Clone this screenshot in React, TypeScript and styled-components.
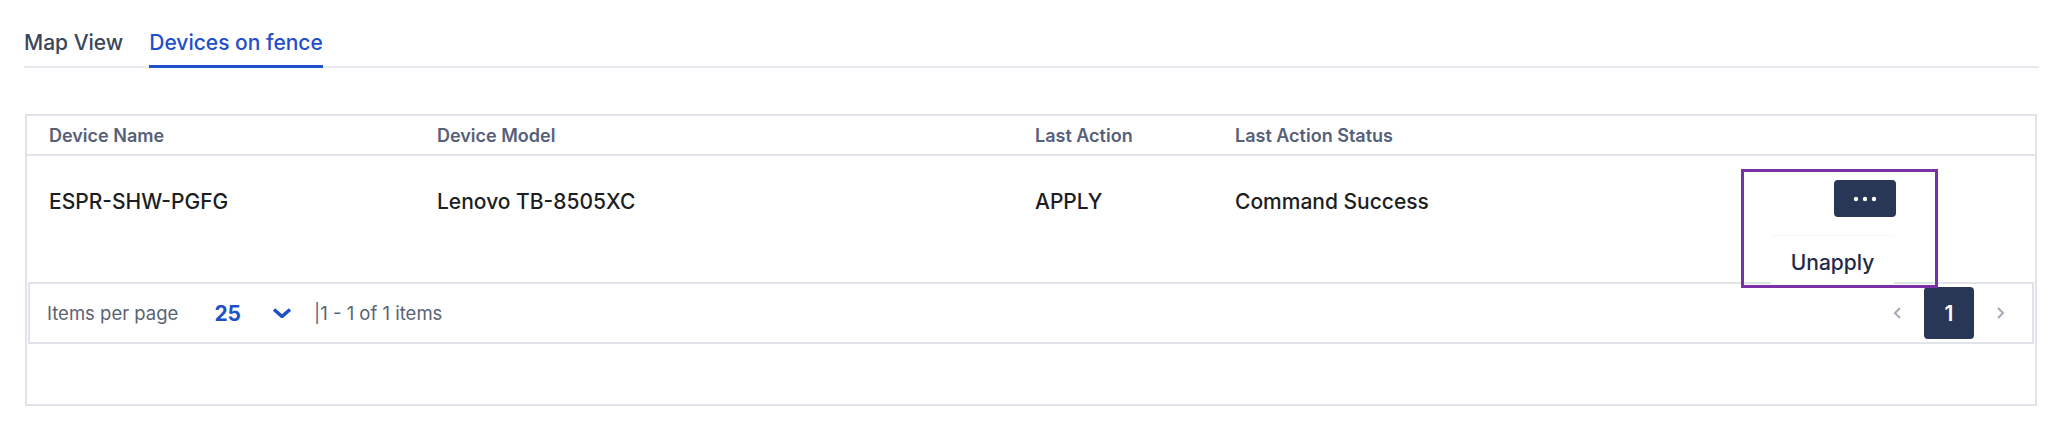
import React from "react";
import styled, { createGlobalStyle } from "styled-components";

const GlobalStyle = createGlobalStyle`
  html, body {
    margin: 0;
    padding: 0;
    background: #ffffff;
  }
  body {
    font-family: Inter, Roboto, "Liberation Sans", Arial, sans-serif;
    color: #1d1f24;
  }
`;

const columns = "388px 598px 200px 527px 1fr";

const rows = [
  {
    name: "ESPR-SHW-PGFG",
    model: "Lenovo TB-8505XC",
    action: "APPLY",
    status: "Command Success",
  },
];

const Page = styled.div`
  padding: 30px 33px 0 24px;
`;

const TabBar = styled.div`
  display: flex;
  gap: 26px;
  border-bottom: 2px solid #e8e9ee;
`;

const Tab = styled.div<{ $active?: boolean }>`
  font-size: 21px;
  font-weight: 500;
  line-height: 25px;
  padding-bottom: 10px;
  margin-bottom: -2px;
  color: ${(p) => (p.$active ? "#1f4fc9" : "#3c4659")};
  border-bottom: 3px solid ${(p) => (p.$active ? "#1f4fc9" : "transparent")};
`;

const Table = styled.div`
  margin: 46px 0 0 1px;
  border: 2px solid #e0e3e8;
  width: 2008px;
`;

const HeaderRow = styled.div`
  display: grid;
  grid-template-columns: ${columns};
  height: 38px;
  align-items: center;
  border-bottom: 2px solid #e0e3e8;
`;

const HeadCell = styled.div`
  padding-left: 22px;
  font-size: 18px;
  font-weight: 600;
  color: #566179;
`;

const DataRow = styled.div`
  display: grid;
  grid-template-columns: ${columns};
  height: 126px;
  position: relative;
  z-index: 2;
`;

const Cell = styled.div`
  padding: 33px 0 0 22px;
  font-size: 21px;
  font-weight: 500;
  line-height: 25px;
  color: #1c1e22;
`;

const ActionCell = styled.div`
  position: relative;
  padding: 24px 0 0 94px;
`;

const DotsButton = styled.button`
  width: 62px;
  height: 37px;
  border: 0;
  border-radius: 4px;
  background: #293756;
  display: flex;
  align-items: center;
  justify-content: center;
  padding: 0;
  position: relative;
  z-index: 1;
`;

const Menu = styled.div`
  position: absolute;
  left: 1px;
  top: 13px;
  width: 191px;
  height: 113px;
  border: 3px solid #7d2fa6;
  display: flex;
  flex-direction: column;
  justify-content: flex-end;
`;

const MenuItem = styled.div`
  margin-left: 27px;
  width: 123px;
  height: 50px;
  box-sizing: border-box;
  padding-top: 14px;
  background: #ffffff;
  border-top: 1px dotted #eef0f3;
  text-align: center;
  font-size: 21px;
  font-weight: 500;
  line-height: 25px;
  color: #1f2a48;
`;

const Footer = styled.div`
  margin: 0 1px;
  height: 58px;
  border: 2px solid #e0e3e8;
  display: flex;
  align-items: center;
  padding: 0 26px 0 17px;
`;

const FooterText = styled.span`
  font-size: 18.5px;
  font-weight: 400;
  color: #5b6372;
`;

const PerPage = styled.span`
  font-size: 21px;
  font-weight: 700;
  color: #1f4fc9;
  margin-left: 36px;
`;

const SelectChevron = styled.svg`
  margin: 0 22px 0 31px;
`;

const Spacer = styled.div`
  flex: 1;
`;

const PageNav = styled.div`
  display: flex;
  align-items: center;
  gap: 22px;
`;

const PageButton = styled.div`
  width: 50px;
  height: 52px;
  border-radius: 4px;
  background: #293756;
  color: #ffffff;
  font-size: 21px;
  font-weight: 600;
  display: flex;
  align-items: center;
  justify-content: center;
`;

const Empty = styled.div`
  height: 60px;
`;

const Dots = () => (
  <svg width="24" height="6" viewBox="0 0 24 6">
    <circle cx="3" cy="3" r="2.2" fill="#fff" />
    <circle cx="12" cy="3" r="2.2" fill="#fff" />
    <circle cx="21" cy="3" r="2.2" fill="#fff" />
  </svg>
);

const Chevron = ({ dir }: { dir: "left" | "right" }) => (
  <svg width="10" height="14" viewBox="0 0 10 14">
    <path
      d={dir === "left" ? "M8 2 L3 7 L8 12" : "M2 2 L7 7 L2 12"}
      stroke="#a3aab8"
      strokeWidth="2"
      fill="none"
    />
  </svg>
);

export default function App() {
  return (
    <Page>
      <GlobalStyle />
      <TabBar>
        <Tab>Map View</Tab>
        <Tab $active>Devices on fence</Tab>
      </TabBar>
      <Table>
        <HeaderRow>
          <HeadCell>Device Name</HeadCell>
          <HeadCell>Device Model</HeadCell>
          <HeadCell>Last Action</HeadCell>
          <HeadCell>Last Action Status</HeadCell>
          <HeadCell />
        </HeaderRow>
        {rows.map((r) => (
          <DataRow key={r.name}>
            <Cell>{r.name}</Cell>
            <Cell>{r.model}</Cell>
            <Cell>{r.action}</Cell>
            <Cell>{r.status}</Cell>
            <ActionCell>
              <DotsButton aria-label="More">
                <Dots />
              </DotsButton>
              <Menu>
                <MenuItem>Unapply</MenuItem>
              </Menu>
            </ActionCell>
          </DataRow>
        ))}
        <Footer>
          <FooterText>Items per page</FooterText>
          <PerPage>25</PerPage>
          <SelectChevron width="20" height="10" viewBox="0 0 20 10">
            <path d="M2 1.5 L10 8.5 L18 1.5" stroke="#1f4fc9" strokeWidth="3.5" fill="none" />
          </SelectChevron>
          <FooterText>|1 - 1 of 1 items</FooterText>
          <Spacer />
          <PageNav>
            <Chevron dir="left" />
            <PageButton>1</PageButton>
            <Chevron dir="right" />
          </PageNav>
        </Footer>
        <Empty />
      </Table>
    </Page>
  );
}
